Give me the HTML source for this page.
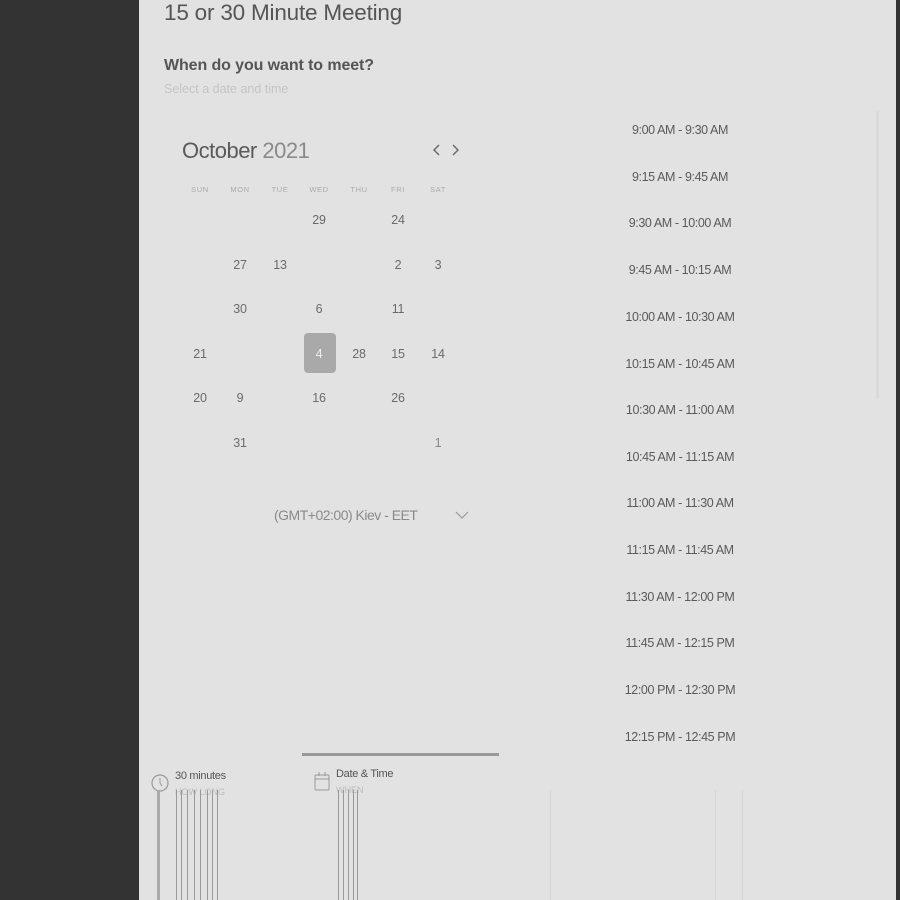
<!DOCTYPE html>
<html><head><meta charset="utf-8"><style>
*{margin:0;padding:0;box-sizing:border-box}
body{width:900px;height:900px;background:#333;position:relative;overflow:hidden;font-family:"Liberation Sans",sans-serif}
.panel{position:absolute;left:139px;top:0;width:757px;height:900px;background:#e2e2e2}
.a{position:absolute;white-space:nowrap}
.d{position:absolute;width:40px;text-align:center;font-size:12.5px;color:#6a6a6a;letter-spacing:-0.2px}
.w{position:absolute;width:40px;text-align:center;font-size:7.5px;color:#aaa;letter-spacing:0.6px}
.t{position:absolute;left:600px;width:160px;text-align:center;font-size:12.5px;color:#5a5a5a;letter-spacing:-0.4px}
.v{position:absolute;width:1px;background:#999;top:790px;height:110px}
</style></head><body>
<div class="panel"></div>
<div class="a" style="left:164px;top:0px;font-size:22.5px;color:#555;letter-spacing:-0.2px">15 or 30 Minute Meeting</div>
<div class="a" style="left:164px;top:57px;font-size:16px;font-weight:bold;color:#555;letter-spacing:-0.1px">When do you want to meet?</div>
<div class="a" style="left:164px;top:82px;font-size:12.5px;color:#c4c4c4">Select a date and time</div>
<div class="a" style="left:182px;top:138px;font-size:22px;color:#5a5a5a;letter-spacing:-0.5px">October <span style="color:#8a8a8a">2021</span></div>
<svg class="a" style="left:430px;top:143px" width="32" height="14"><path d="M9 2 L4 7 L9 12 M23 2 L28 7 L23 12" stroke="#666" stroke-width="1.4" fill="none"/></svg>
<div class="w" style="left:180px;top:185px">SUN</div><div class="w" style="left:220px;top:185px">MON</div><div class="w" style="left:260px;top:185px">TUE</div><div class="w" style="left:299px;top:185px">WED</div><div class="w" style="left:339px;top:185px">THU</div><div class="w" style="left:378px;top:185px">FRI</div><div class="w" style="left:418px;top:185px">SAT</div>
<div class="d" style="left:299px;top:213px">29</div><div class="d" style="left:378px;top:213px">24</div>
<div class="d" style="left:220px;top:258px">27</div><div class="d" style="left:260px;top:258px">13</div><div class="d" style="left:378px;top:258px">2</div><div class="d" style="left:418px;top:258px">3</div>
<div class="d" style="left:220px;top:302px">30</div><div class="d" style="left:299px;top:302px">6</div><div class="d" style="left:378px;top:302px">11</div>
<div class="a" style="left:304px;top:333px;width:32px;height:40px;background:#a9a9a9;border-radius:4px"></div>
<div class="d" style="left:180px;top:347px">21</div><div class="d" style="left:299px;top:347px;color:#eee">4</div><div class="d" style="left:339px;top:347px">28</div><div class="d" style="left:378px;top:347px">15</div><div class="d" style="left:418px;top:347px">14</div>
<div class="d" style="left:180px;top:391px">20</div><div class="d" style="left:220px;top:391px">9</div><div class="d" style="left:299px;top:391px">16</div><div class="d" style="left:378px;top:391px">26</div>
<div class="d" style="left:220px;top:436px">31</div><div class="d" style="left:418px;top:436px;color:#888">1</div>
<div class="a" style="left:274px;top:507px;font-size:14px;color:#8a8a8a;letter-spacing:-0.5px">(GMT+02:00) Kiev - EET</div>
<svg class="a" style="left:455px;top:510px" width="14" height="10"><path d="M1 2 L7 8 L13 2" stroke="#999" stroke-width="1.2" fill="none"/></svg>
<div class="t" style="top:123px">9:00 AM - 9:30 AM</div>
<div class="t" style="top:170px">9:15 AM - 9:45 AM</div>
<div class="t" style="top:216px">9:30 AM - 10:00 AM</div>
<div class="t" style="top:263px">9:45 AM - 10:15 AM</div>
<div class="t" style="top:310px">10:00 AM - 10:30 AM</div>
<div class="t" style="top:357px">10:15 AM - 10:45 AM</div>
<div class="t" style="top:403px">10:30 AM - 11:00 AM</div>
<div class="t" style="top:450px">10:45 AM - 11:15 AM</div>
<div class="t" style="top:496px">11:00 AM - 11:30 AM</div>
<div class="t" style="top:543px">11:15 AM - 11:45 AM</div>
<div class="t" style="top:590px">11:30 AM - 12:00 PM</div>
<div class="t" style="top:636px">11:45 AM - 12:15 PM</div>
<div class="t" style="top:683px">12:00 PM - 12:30 PM</div>
<div class="t" style="top:730px">12:15 PM - 12:45 PM</div>
<div class="a" style="left:876px;top:111px;width:3px;height:288px;background:#dadada;border-radius:2px"></div>
<div class="a" style="left:302px;top:753px;width:197px;height:3px;background:#999"></div>
<svg class="a" style="left:151px;top:773px" width="18" height="20"><circle cx="9" cy="10" r="8" stroke="#999" stroke-width="1.2" fill="none"/><path d="M9 5 V10 L11 13" stroke="#999" fill="none"/></svg>
<div class="a" style="left:175px;top:770px;font-size:11px;color:#555;letter-spacing:-0.3px">30 minutes</div>
<div class="a" style="left:175px;top:787px;font-size:9px;color:#bbb">HOW LONG</div>
<svg class="a" style="left:313px;top:771px" width="18" height="20"><rect x="2" y="4" width="14" height="15" rx="1" stroke="#999" fill="none"/><path d="M2 8 H16 M6 1 V5 M12 1 V5" stroke="#999" fill="none"/></svg>
<div class="a" style="left:336px;top:768px;font-size:11px;color:#555;letter-spacing:-0.3px">Date &amp; Time</div>
<div class="a" style="left:336px;top:785px;font-size:9px;color:#bbb">WHEN</div>
<div class="v" style="left:157px;width:3px;background:#aaa"></div>
<div class="v" style="left:176px"></div><div class="v" style="left:181px"></div><div class="v" style="left:187px"></div><div class="v" style="left:194px"></div><div class="v" style="left:200px"></div><div class="v" style="left:207px"></div><div class="v" style="left:212px"></div><div class="v" style="left:217px"></div>
<div class="v" style="left:338px"></div><div class="v" style="left:343px"></div><div class="v" style="left:348px"></div><div class="v" style="left:353px"></div><div class="v" style="left:357px"></div>
<div class="v" style="left:550px;background:#d6d6d6"></div><div class="v" style="left:715px;background:#d6d6d6"></div><div class="v" style="left:742px;background:#d6d6d6"></div>
</body></html>
